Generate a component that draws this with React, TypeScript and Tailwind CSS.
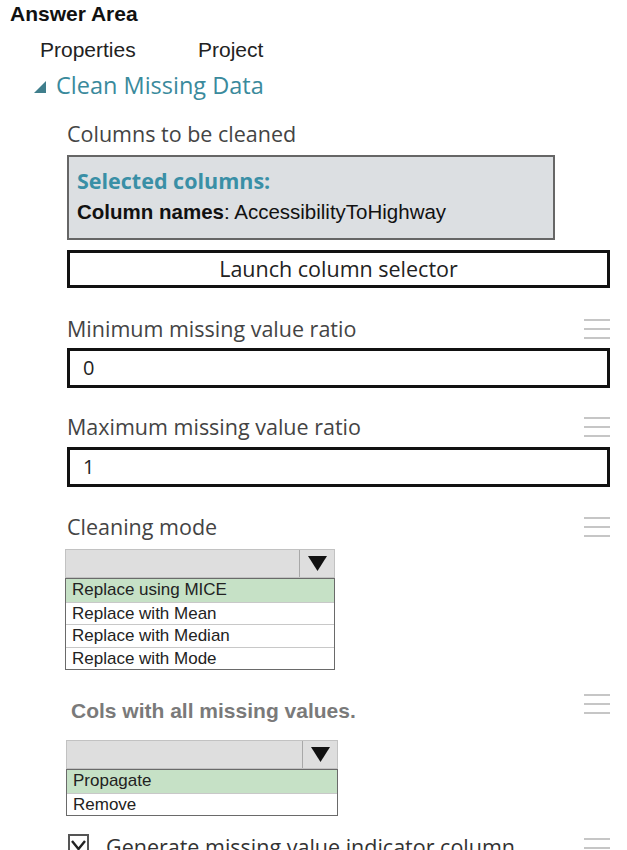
import React from 'react';

const segoe = "font-['Open_Sans','Noto_Sans',sans-serif]";
const arial = "font-['Liberation_Sans',Arial,sans-serif]";

const Burger = ({ className = 'pt-[4px]' }: { className?: string }) => (
  <div className={`flex flex-col gap-[7px] w-[26px] ${className}`}>
    <div className="h-[2px] bg-[#c6c6c6]" />
    <div className="h-[2px] bg-[#c6c6c6]" />
    <div className="h-[2px] bg-[#c6c6c6]" />
  </div>
);

const Label = ({ text }: { text: string }) => (
  <div className="flex justify-between items-start">
    <span className={`${segoe} text-[21.5px] leading-[28px] text-[#444]`}>{text}</span>
    <Burger />
  </div>
);

const TextBox = ({ value }: { value: string }) => (
  <div className={`h-[40px] border-[3px] border-[#111] flex items-center px-[13px] ${segoe} text-[20px] text-[#222]`}>
    {value}
  </div>
);

const Dropdown = ({ options, width }: { options: string[]; width: string }) => (
  <div className={width}>
    <div className="h-[29px] bg-[#dedede] border border-[#c2c2c2] flex justify-end">
      <div className="w-[35px] border-l border-[#a8a8a8] flex items-center justify-center">
        <svg width="19" height="15" viewBox="0 0 19 15">
          <polygon points="0,0 19,0 9.5,15" fill="#111" />
        </svg>
      </div>
    </div>
    <div className="border border-[#6a6a6a]">
      {options.map((o, i) => (
        <div
          key={o}
          className={`h-[22.5px] leading-[21px] pl-[6px] ${arial} text-[17px] text-[#222] ${i === 0 ? 'bg-[#c6e1c6]' : 'bg-white border-t border-[#c8c8c8]'}`}
        >
          {o}
        </div>
      ))}
    </div>
  </div>
);

export default function App() {
  return (
    <div className="w-[627px] h-[850px] overflow-hidden bg-white">
      <div className={`${arial} font-bold text-[21px] leading-[22px] text-[#111] pl-[10px] pt-[3px]`}>Answer Area</div>

      <div className={`flex ${arial} text-[21px] leading-[22px] text-[#222] pl-[40px] mt-[14px]`}>
        <span className="w-[158px]">Properties</span>
        <span>Project</span>
      </div>

      <div className="flex items-center pl-[34px] mt-[10px]">
        <svg width="12" height="12" viewBox="0 0 12 12" className="mr-[10px] mt-[4px]">
          <polygon points="12,0 12,12 0,12" fill="#3f7e8c" />
        </svg>
        <span className={`${segoe} text-[23.5px] leading-[28px] text-[#3a8a9c]`}>Clean Missing Data</span>
      </div>

      <div className="ml-[67px] w-[543px] flex flex-col">
        <div className={`${segoe} text-[21.5px] leading-[28px] text-[#444] mt-[21px]`}>Columns to be cleaned</div>

        <div className="w-[488px] h-[85px] mt-[7px] bg-[#dcdfe2] border-2 border-[#666] pl-[8px] pt-[10px]">
          <div className={`${segoe} font-bold text-[21.5px] leading-[28px] text-[#3a8fa6]`}>Selected columns:</div>
          <div className={`${arial} text-[20.5px] leading-[24px] text-[#111] mt-[5px]`}>
            <span className="font-bold">Column names</span>: AccessibilityToHighway
          </div>
        </div>

        <div className={`h-[38px] mt-[10px] border-[3px] border-[#111] flex items-center justify-center ${segoe} text-[21.5px] text-[#222]`}>
          Launch column selector
        </div>

        <div className="mt-[27px]"><Label text="Minimum missing value ratio" /></div>
        <div className="mt-[5px]"><TextBox value="0" /></div>

        <div className="mt-[25px]"><Label text="Maximum missing value ratio" /></div>
        <div className="mt-[6px]"><TextBox value="1" /></div>

        <div className="mt-[26px]"><Label text="Cleaning mode" /></div>
        <div className="mt-[8px] -ml-[2px]">
          <Dropdown width="w-[270px]" options={['Replace using MICE', 'Replace with Mean', 'Replace with Median', 'Replace with Mode']} />
        </div>

        <div className="mt-[27px] flex justify-between items-start">
          <span className={`${arial} font-bold text-[21px] leading-[28px] text-[#7a7a7a] ml-[4px]`}>Cols with all missing values.</span>
          <Burger className="-mt-[3px]" />
        </div>
        <div className="mt-[15px] -ml-[1px]">
          <Dropdown width="w-[272px]" options={['Propagate', 'Remove']} />
        </div>

        <div className="mt-[18px] flex justify-between items-start">
          <div className="flex items-start">
            <div className="w-[21px] h-[21px] border-2 border-[#555] flex items-center justify-center ml-[1px]">
              <svg width="15" height="12" viewBox="0 0 15 12">
                <polyline points="1,2 7.5,10 14,2" fill="none" stroke="#222" strokeWidth="2.4" />
              </svg>
            </div>
            <span className={`${segoe} text-[21.5px] leading-[28px] text-[#333] ml-[17px] -mt-[1px]`}>Generate missing value indicator column</span>
          </div>
          <Burger />
        </div>
      </div>
    </div>
  );
}
